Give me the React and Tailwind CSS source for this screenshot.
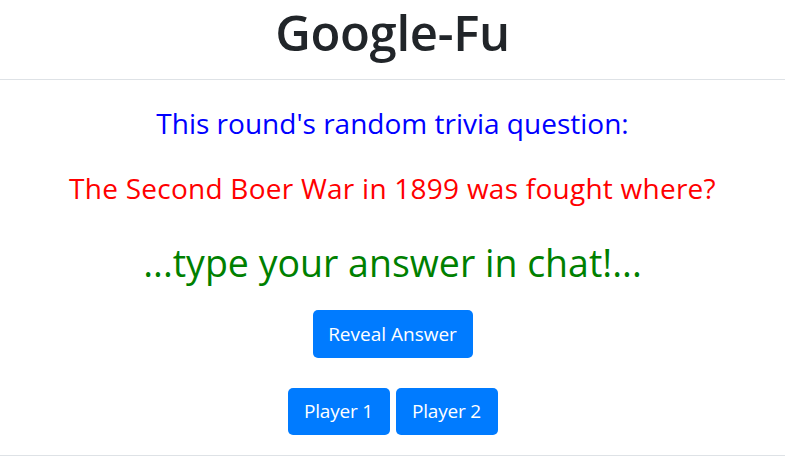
export default function App() {
  return (
    <div className="min-h-screen bg-white font-['Open_Sans',sans-serif] text-center">
      <header className="h-[80px] border-b border-[#dee2e6] flex items-center justify-center">
        <h1 className="text-[49px] leading-none font-semibold text-[#212529] tracking-[-0.3px] pb-[14px]">Google-Fu</h1>
      </header>
      <main className="flex flex-col items-center border-b border-[#dee2e6] pb-[20px]">
        <p className="mt-[22px] text-[28px] leading-[42px] text-[#0000ff]">This round's random trivia question:</p>
        <p className="mt-[23px] text-[28px] leading-[42px] text-[#ff0000] tracking-[0.25px]">The Second Boer War in 1899 was fought where?</p>
        <p className="mt-[30px] text-[37.5px] leading-[48px] text-[#008000]">...type your answer in chat!...</p>
        <button className="mt-[23px] h-[48px] w-[160px] rounded-[5px] bg-[#007bff] text-white text-[19px]">Reveal Answer</button>
        <div className="mt-[30px] flex gap-[6px]">
          <button className="h-[47px] w-[102px] rounded-[5px] bg-[#007bff] text-white text-[19px] tracking-[-0.2px]">Player 1</button>
          <button className="h-[47px] w-[102px] rounded-[5px] bg-[#007bff] text-white text-[19px] tracking-[-0.2px]">Player 2</button>
        </div>
      </main>
    </div>
  );
}
